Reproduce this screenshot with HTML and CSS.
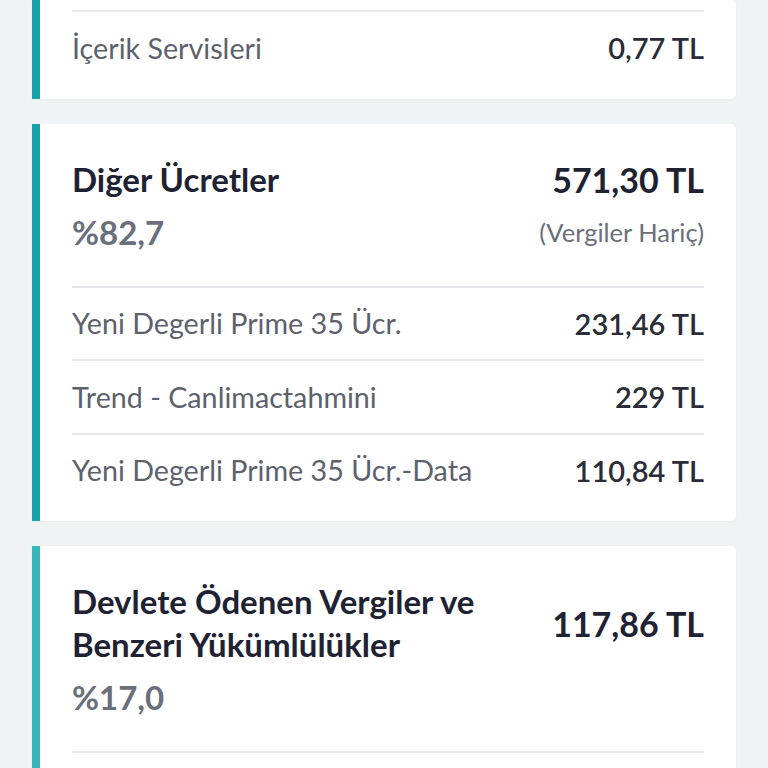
FILE: index.html
```html
<!DOCTYPE html>
<html lang="tr">
<head>
<meta charset="utf-8">
<title>Fatura Detayı</title>
<link rel="stylesheet" href="styles.css">
</head>
<body>
<main class="list">
  <section class="card card-first">
    <div class="row">
      <span class="row-label">İçerik Servisleri</span>
      <span class="row-amount">0,77 TL</span>
    </div>
  </section>

  <section class="card">
    <div class="head">
      <div class="head-top">
        <h2 class="title">Diğer Ücretler</h2>
        <span class="total">571,30 TL</span>
      </div>
      <div class="head-sub">
        <span class="percent">%82,7</span>
        <span class="note">(Vergiler Hariç)</span>
      </div>
    </div>
    <div class="row">
      <span class="row-label">Yeni Degerli Prime 35 Ücr.</span>
      <span class="row-amount">231,46 TL</span>
    </div>
    <div class="row">
      <span class="row-label">Trend - Canlimactahmini</span>
      <span class="row-amount">229 TL</span>
    </div>
    <div class="row">
      <span class="row-label">Yeni Degerli Prime 35 Ücr.-Data</span>
      <span class="row-amount">110,84 TL</span>
    </div>
  </section>

  <section class="card card-light">
    <div class="head">
      <div class="head-top">
        <h2 class="title title-wrap">Devlete Ödenen Vergiler ve Benzeri Yükümlülükler</h2>
        <span class="total">117,86 TL</span>
      </div>
      <div class="head-sub">
        <span class="percent">%17,0</span>
      </div>
    </div>
    <div class="divider"></div>
  </section>
</main>
</body>
</html>
```

FILE: styles.css
```css
* { box-sizing: border-box; }

html, body {
  margin: 0;
  padding: 0;
  background: #f1f2f4;
  font-family: "Lato", "Open Sans", sans-serif;
  overflow: hidden;
}

.list {
  display: flex;
  flex-direction: column;
  gap: 25px;
  padding: 0 32px;
}

.card {
  background: #ffffff;
  border-left: 8px solid #16a0a8;
  border-radius: 0 5px 5px 0;
  padding: 0 32px 15px 32px;
  box-shadow: 0 1px 3px rgba(30, 40, 60, 0.04);
}

.card-first {
  padding-top: 10px;
}

.card-light {
  border-left-color: #36b5bb;
  min-height: 260px;
}

.head {
  padding: 34px 0 32px;
}

.head-top {
  display: flex;
  justify-content: space-between;
  align-items: center;
  gap: 24px;
}

.title {
  margin: 0;
  font-size: 33px;
  line-height: 43px;
  font-weight: 700;
  color: #1e2232;
}

.title-wrap {
  max-width: 430px;
}

.total {
  font-size: 34px;
  line-height: 43px;
  font-weight: 700;
  color: #1e2232;
  white-space: nowrap;
}

.head-sub {
  display: flex;
  justify-content: space-between;
  align-items: center;
  margin-top: 10px;
}

.percent {
  font-size: 33px;
  line-height: 43px;
  font-weight: 700;
  color: #6a6f7c;
}

.note {
  font-size: 25.5px;
  line-height: 43px;
  color: #6a6f7c;
}

.row {
  display: flex;
  justify-content: space-between;
  align-items: center;
  height: 73.5px;
  border-top: 2px solid #e6e7ea;
}

.divider {
  border-top: 2px solid #e6e7ea;
}

.row-label {
  font-size: 28.7px;
  color: #5c616c;
}

.row-amount {
  font-size: 29px;
  font-weight: 600;
  color: #2a2d38;
}
```
